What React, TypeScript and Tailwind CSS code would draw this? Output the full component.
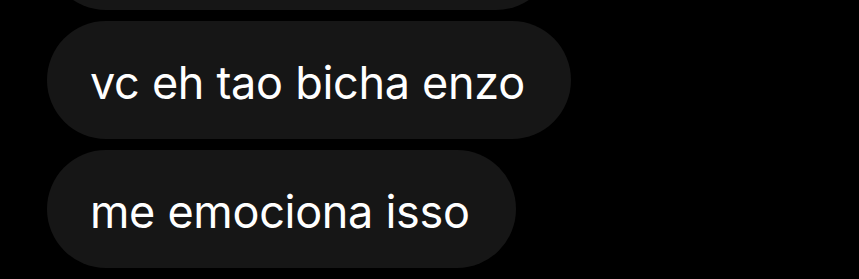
const messages = ['', 'vc eh tao bicha enzo', 'me emociona isso'];

export default function App() {
  return (
    <div className="h-[279px] w-[859px] overflow-hidden bg-black">
      <div className="-mt-[108px] flex flex-col items-start gap-[11px] pl-[47px]">
        {messages.map((text, i) => (
          <div
            key={i}
            className={`flex h-[118px] items-center rounded-full bg-[#161616] pl-[43px] pr-[46px] pt-[6px] text-[45px] tracking-[-0.3px] text-white ${
              i === 0 ? 'w-[508px]' : ''
            }`}
            style={{ fontFamily: 'Inter, "Noto Sans", sans-serif' }}
          >
            {text}
          </div>
        ))}
      </div>
    </div>
  );
}
